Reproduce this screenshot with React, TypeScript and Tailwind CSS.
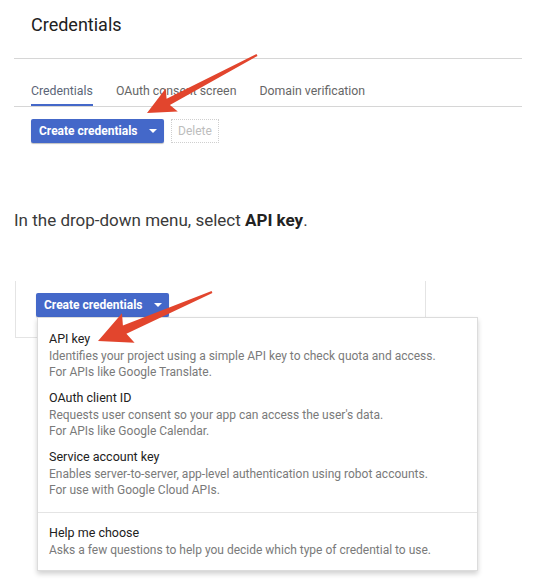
import React from 'react';

type Pt = [number, number];

// Skitch-style arrow: tapered shaft with a triangular head
function arrowPoints(tail: Pt, tip: Pt, headLen: number, headHalf: number, shaftHalf: number, tailHalf: number) {
  const dx = tip[0] - tail[0];
  const dy = tip[1] - tail[1];
  const len = Math.hypot(dx, dy);
  const ux = dx / len;
  const uy = dy / len;
  const nx = -uy;
  const ny = ux;
  const bx = tip[0] - ux * headLen;
  const by = tip[1] - uy * headLen;
  const jx = bx + ux * 4;
  const jy = by + uy * 4;
  const pts: Pt[] = [
    [tail[0] + nx * tailHalf, tail[1] + ny * tailHalf],
    [jx + nx * shaftHalf, jy + ny * shaftHalf],
    [bx + nx * headHalf, by + ny * headHalf],
    tip,
    [bx - nx * headHalf, by - ny * headHalf],
    [jx - nx * shaftHalf, jy - ny * shaftHalf],
    [tail[0] - nx * tailHalf, tail[1] - ny * tailHalf],
  ];
  return pts.map((p) => `${p[0].toFixed(1)},${p[1].toFixed(1)}`).join(' ');
}

function CreateButton() {
  return (
    <button className="h-6 w-[133px] rounded-[2px] bg-[#4468c9] text-white text-[12px] font-bold flex items-center pl-[8px] gap-[11px] shadow-[0_1px_1px_rgba(0,0,0,0.25)]">
      <span>Create credentials</span>
      <span className="w-0 h-0 border-l-[4px] border-r-[4px] border-t-[4px] border-l-transparent border-r-transparent border-t-white" />
    </button>
  );
}

const MENU = [
  {
    title: 'API key',
    lines: ['Identifies your project using a simple API key to check quota and access.', 'For APIs like Google Translate.'],
  },
  {
    title: 'OAuth client ID',
    lines: ["Requests user consent so your app can access the user's data.", 'For APIs like Google Calendar.'],
  },
  {
    title: 'Service account key',
    lines: ['Enables server-to-server, app-level authentication using robot accounts.', 'For use with Google Cloud APIs.'],
  },
];

function MenuItem({ title, lines }: { title: string; lines: string[] }) {
  return (
    <div className="px-[11px]">
      <div className="text-[12.5px] leading-4 text-[#212121]">{title}</div>
      <div className="mt-[1px] text-[12px] leading-4 text-[#7a7a7a]">
        {lines.map((l) => (
          <div key={l}>{l}</div>
        ))}
      </div>
    </div>
  );
}

export default function App() {
  return (
    <div className="relative w-[556px] h-[579px] bg-white overflow-hidden font-['Roboto',sans-serif]">
      {/* top screenshot: credentials page */}
      <div className="ml-[14px] w-[508px]">
        <div className="h-[59px] pt-[13px] pl-[17px] border-b border-[#d6d6d6]">
          <h1 className="text-[18px] leading-6 text-[#212121]">Credentials</h1>
        </div>
        <div className="flex gap-[23px] pl-[17px] border-b border-[#d6d6d6] text-[12.3px] leading-4">
          <div className="pt-[24px] pb-[5px] border-b-2 border-[#4468c9] text-[#5b6577]">Credentials</div>
          <div className="pt-[24px] pb-[5px] border-b-2 border-transparent text-[#666]">OAuth consent screen</div>
          <div className="pt-[24px] pb-[5px] border-b-2 border-transparent text-[#666]">Domain verification</div>
        </div>
        <div className="mt-[12px] pl-[17px] flex gap-[7px]">
          <CreateButton />
          <div className="h-6 w-[48px] border border-dotted border-[#cfcfcf] text-[12px] text-[#bdbdbd] flex items-center justify-center">
            Delete
          </div>
        </div>
      </div>

      <p className="mt-[65px] ml-[14px] text-[17px] leading-6 text-[#3a3a3a]">
        In the drop-down menu, select <b className="font-bold text-[#222]">API key</b>.
      </p>

      {/* second screenshot: open dropdown */}
      <div className="mt-[49px] ml-[15px] w-[411px] h-[57px] border-l border-r border-b border-[#e4e4e4] pl-[20px] pt-[12px]">
        <div className="relative">
          <CreateButton />
          <div className="absolute left-[1px] top-6 w-[441px] h-[254px] bg-white border border-[#dcdcdc] shadow-[0_3px_5px_rgba(0,0,0,0.18)] pt-[13px]">
            <div className="flex flex-col gap-[10px]">
              {MENU.map((m) => (
                <MenuItem key={m.title} title={m.title} lines={m.lines} />
              ))}
            </div>
            <div className="mt-[14px] border-t border-[#e4e4e4] pt-[12px]">
              <div className="px-[11px]">
                <div className="text-[12.5px] leading-4 text-[#212121]">Help me choose</div>
                <div className="mt-[1px] text-[12px] leading-4 text-[#7a7a7a]">
                  Asks a few questions to help you decide which type of credential to use.
                </div>
              </div>
            </div>
          </div>
        </div>
      </div>

      {/* red annotation arrows */}
      <svg className="absolute inset-0 pointer-events-none" width="556" height="579" viewBox="0 0 556 579">
        <polygon points={arrowPoints([257, 55], [147, 113], 28, 13, 3.5, 1)} fill="#e2452d" />
        <polygon points={arrowPoints([212, 292], [98, 341], 33, 16, 4.5, 1)} fill="#e2452d" />
      </svg>
    </div>
  );
}
